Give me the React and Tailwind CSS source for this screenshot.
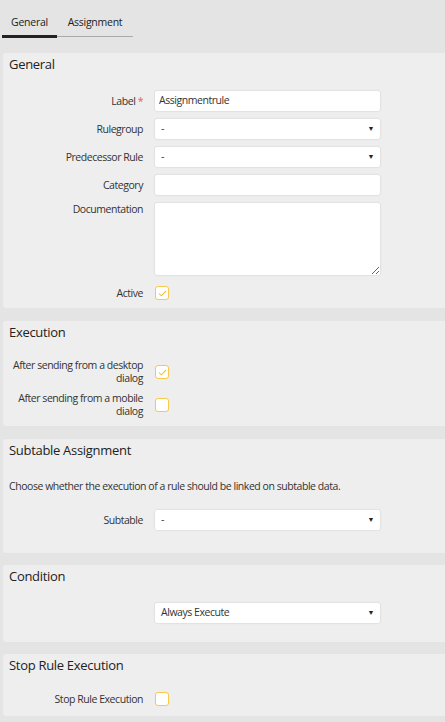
import React from "react";

function Check({ checked }) {
  return (
    <div className="w-[14px] h-[14px] rounded-[3px] border border-[#f7c948] bg-white flex items-center justify-center">
      {checked && (
        <svg width="9" height="7" viewBox="0 0 9 7" fill="none">
          <path d="M1 3.6 L3.4 5.8 L8 1" stroke="#f2c23a" strokeWidth="1.1" />
        </svg>
      )}
    </div>
  );
}

function Input({ value }) {
  return (
    <div className="w-[225px] h-[20px] bg-white rounded-[2px] shadow-[0_0_2px_rgba(0,0,0,0.18)] px-[4px] flex items-center text-[10.5px] tracking-[-0.45px] text-[#333]">
      {value}
    </div>
  );
}

function Select({ value }) {
  return (
    <div className="w-[225px] h-[20px] bg-white rounded-[2px] shadow-[0_0_2px_rgba(0,0,0,0.18)] pl-[6px] pr-[6px] flex items-center justify-between text-[10.5px] tracking-[-0.45px] text-[#333]">
      <span>{value}</span>
      <span className="text-[7px] text-[#222]">▼</span>
    </div>
  );
}

function Row({ label, required, children, className = "items-center" }) {
  return (
    <div className={"flex gap-[12px] " + className}>
      <div className="w-[134px] text-right text-[10.5px] tracking-[-0.45px] leading-[13px] text-[#333]">
        {label}
        {required && <span className="text-[#e06060]"> *</span>}
      </div>
      {children}
    </div>
  );
}

function Panel({ title, className = "", children }) {
  return (
    <section className={"ml-[3px] bg-[#eeeeee] rounded-l-[3px] px-[6px] " + className}>
      <h2 className="h-[22px] leading-[22px] text-[13px] tracking-[-0.3px] text-[#222] font-normal">{title}</h2>
      {children}
    </section>
  );
}

export default function App() {
  return (
    <div className="min-h-screen bg-[#e4e4e4] font-['Open_Sans',sans-serif] pb-[7px]">
      {/* tabs */}
      <div className="flex pt-[15px] pl-[2px] h-[53px]">
        <div className="w-[55px] h-[23px] text-center text-[10.5px] tracking-[-0.25px] leading-[15px] text-[#222] border-b-[3px] border-[#222]">General</div>
        <div className="w-[76px] h-[22px] text-center text-[10.5px] tracking-[-0.25px] leading-[15px] text-[#222] border-b border-[#aaa]">Assignment</div>
      </div>

      <Panel title="General" className="pb-[5px]">
        <div className="flex flex-col gap-[8px] mt-[16px]">
          <Row label="Label" required>
            <Input value="Assignmentrule" />
          </Row>
          <Row label="Rulegroup">
            <Select value="-" />
          </Row>
          <Row label="Predecessor Rule">
            <Select value="-" />
          </Row>
          <Row label="Category">
            <Input value="" />
          </Row>
          <Row label="Documentation" className="items-start">
            <textarea className="w-[225px] h-[72px] bg-white rounded-[2px] shadow-[0_0_2px_rgba(0,0,0,0.18)] outline-none text-[11px]" />
          </Row>
          <Row label="Active" className="items-center h-[20px]">
            <Check checked />
          </Row>
        </div>
      </Panel>

      <Panel title="Execution" className="mt-[13px] pb-[8px]">
        <div className="flex flex-col gap-[7px] mt-[16px]">
          <Row label="After sending from a desktop dialog">
            <Check checked />
          </Row>
          <Row label="After sending from a mobile dialog">
            <Check />
          </Row>
        </div>
      </Panel>

      <Panel title="Subtable Assignment" className="mt-[13px] pb-[23px]">
        <p className="mt-[18px] text-[10.5px] tracking-[-0.45px] leading-[14px] text-[#333]">
          Choose whether the execution of a rule should be linked on subtable data.
        </p>
        <div className="mt-[17px]">
          <Row label="Subtable">
            <Select value="-" />
          </Row>
        </div>
      </Panel>

      <Panel title="Condition" className="mt-[12px] pb-[19px]">
        <div className="mt-[16px]">
          <Row label="">
            <Select value="Always Execute" />
          </Row>
        </div>
      </Panel>

      <Panel title="Stop Rule Execution" className="mt-[12px] pb-[10px]">
        <div className="mt-[16px]">
          <Row label="Stop Rule Execution">
            <Check />
          </Row>
        </div>
      </Panel>
    </div>
  );
}
